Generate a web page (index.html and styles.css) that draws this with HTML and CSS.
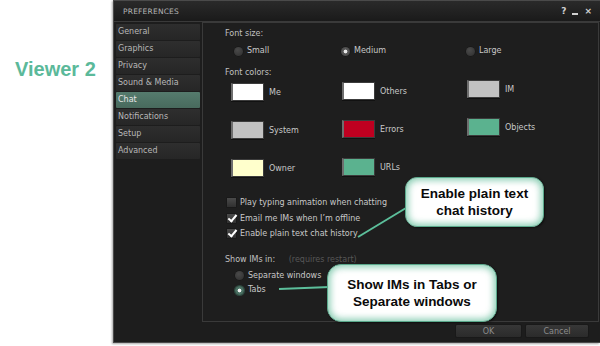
FILE: index.html
```html
<!DOCTYPE html>
<html lang="en">
<head>
  <meta charset="UTF-8">
  <title>Preferences - Chat</title>
  <link rel="stylesheet" href="styles.css">
</head>
<body>
  <div class="page">
    <div class="brand">Viewer 2</div>

    <div class="floater">
      <div class="titlebar">
        <span class="title">PREFERENCES</span>
        <span class="controls"><span>?</span><span class="min"></span><span>&#215;</span></span>
      </div>

      <div class="main">
        <ul class="tabs">
          <li>General</li>
          <li>Graphics</li>
          <li>Privacy</li>
          <li>Sound &amp; Media</li>
          <li class="active">Chat</li>
          <li>Notifications</li>
          <li>Setup</li>
          <li>Advanced</li>
        </ul>

        <div class="panel">
          <div class="label first">Font size:</div>
          <div class="sizes">
            <div class="opt"><span class="radio"></span>Small</div>
            <div class="opt"><span class="radio on"></span>Medium</div>
            <div class="opt"><span class="radio"></span>Large</div>
          </div>

          <div class="label colors-label">Font colors:</div>
          <div class="swatches">
            <div class="col col1">
              <div class="swatch"><span class="chip" style="background:#ffffff"></span>Me</div>
              <div class="swatch"><span class="chip" style="background:#c2c2c2"></span>System</div>
              <div class="swatch"><span class="chip" style="background:#ffffcc"></span>Owner</div>
            </div>
            <div class="col col2">
              <div class="swatch"><span class="chip" style="background:#ffffff"></span>Others</div>
              <div class="swatch"><span class="chip" style="background:#bf0020"></span>Errors</div>
              <div class="swatch"><span class="chip" style="background:#5bb28f"></span>URLs</div>
            </div>
            <div class="col col3">
              <div class="swatch"><span class="chip" style="background:#c2c2c2"></span>IM</div>
              <div class="swatch"><span class="chip" style="background:#5bb28f"></span>Objects</div>
            </div>
          </div>

          <div class="checks">
            <div class="check"><span class="box"></span>Play typing animation when chatting</div>
            <div class="check"><span class="box on"></span>Email me IMs when I’m offline</div>
            <div class="check"><span class="box on"></span>Enable plain text chat history</div>
          </div>

          <div class="label ims-label">Show IMs in: <span class="note">(requires restart)</span></div>
          <div class="ims">
            <div class="opt"><span class="radio"></span>Separate windows</div>
            <div class="opt"><span class="radio on green"></span>Tabs</div>
          </div>
        </div>
      </div>

      <div class="footer">
        <button class="ok">OK</button>
        <button class="cancel">Cancel</button>
      </div>
    </div>

    <!-- annotation layer -->
    <svg class="leaders" width="600" height="346" viewBox="0 0 600 346">
      <line x1="406" y1="208" x2="358" y2="237" />
      <line x1="279" y1="289" x2="330" y2="287" />
    </svg>
    <div class="callout c1">Enable plain text<br>chat history</div>
    <div class="callout c2">Show IMs in Tabs or<br>Separate windows</div>
  </div>
</body>
</html>
```

FILE: styles.css
```css
body {
  margin: 0;
  background: #fff;
  font-family: "DejaVu Sans", sans-serif;
}

.page {
  position: relative;
  width: 600px;
  height: 346px;
  display: flex;
  overflow: hidden;
}

.brand {
  width: 98px;
  padding: 57px 0 0 15px;
  font-family: "Liberation Sans", Arial, sans-serif;
  font-weight: bold;
  font-size: 20px;
  line-height: 24px;
  color: #5bb99a;
}

/* window */
.floater {
  width: 486px;
  height: 341px;
  background: #1d1d1d;
  border: 1px solid #4a4a4a;
  border-right: none;
  box-shadow: -1px 1px 2px rgba(0, 0, 0, 0.35);
  display: flex;
  flex-direction: column;
}

.titlebar {
  height: 20px;
  border-bottom: 1px solid #3a3a3a;
  background: linear-gradient(#2a2a2a, #1a1a1a);
  display: flex;
  align-items: center;
  justify-content: space-between;
  padding: 0 8px 0 9px;
}

.title {
  font-size: 7.5px;
  color: #b4b4b4;
  letter-spacing: 0.2px;
}

.controls {
  display: flex;
  align-items: center;
  gap: 6px;
  font-size: 9px;
  font-weight: bold;
  color: #d0d0d0;
}

.controls .min {
  width: 6px;
  height: 2px;
  background: #d0d0d0;
  margin-top: 5px;
}

.main {
  display: flex;
  height: 300px;
}

.tabs {
  list-style: none;
  margin: 0;
  padding: 2px 2px 0 2px;
  width: 84px;
}

.tabs li {
  height: 16px;
  margin-bottom: 1px;
  padding-left: 2px;
  background: linear-gradient(#2e2e2e, #262626);
  color: #b8b8b8;
  font-size: 8px;
  line-height: 16px;
  border-radius: 1px;
}

.tabs li.active {
  background: linear-gradient(#557b6d, #486a5d);
  color: #e6e6e6;
}

.panel {
  flex: 1;
  margin-right: 1px;
  border: 1px solid #3a3a3a;
  background: #1e1e1e;
  padding-left: 22px;
  font-size: 8px;
  color: #c8c8c8;
}

.label {
  line-height: 10px;
  margin-top: 4px;
  color: #c0c0c0;
}

.label.first {
  margin-top: 6px;
}

.sizes {
  display: grid;
  grid-template-columns: 107px 125px auto;
  margin: 7px 0 0 9px;
}

.opt {
  display: flex;
  align-items: center;
  height: 10px;
  line-height: 10px;
}

.radio {
  width: 9px;
  height: 9px;
  border-radius: 50%;
  background: radial-gradient(circle at 40% 35%, #4a4a4a, #2e2e2e);
  box-shadow: 0 0 0 0.5px #161616;
  margin-right: 4px;
  position: relative;
}

.radio.on {
  background: radial-gradient(circle, #e8e8e8 0 1.6px, #5a5a5a 2.2px, #3c3c3c);
}

.radio.on.green {
  background: radial-gradient(circle, #f0f0f0 0 1.6px, #4d7466 2.2px, #3f6255);
  box-shadow: 0 0 0 1px #2d4a40;
}

.colors-label {
  margin-top: 12px;
}

.swatches {
  display: grid;
  grid-template-columns: 111px 125px auto;
  margin: 2px 0 0 6px;
  height: 97px;
}

.col {
  display: flex;
  flex-direction: column;
  gap: 20px;
}

.col1 { padding-top: 3px; }
.col2 { padding-top: 2px; }

.swatch {
  display: flex;
  align-items: center;
  height: 18px;
  font-size: 8px;
}

.chip {
  width: 30px;
  height: 16px;
  border: 1px solid #3c3c3c;
  border-left: 2px solid #6e6e6e;
  box-shadow: 0 1px 0 #111;
  margin-right: 5px;
}

.checks {
  margin: 18px 0 0 2px;
}

.check {
  display: flex;
  align-items: center;
  height: 15.5px;
}

.box {
  width: 9px;
  height: 9px;
  background: linear-gradient(#4a4a4a, #303030);
  box-shadow: 0 0 0 0.5px #151515;
  margin-right: 4px;
  position: relative;
}

.box.on::after {
  content: "";
  position: absolute;
  left: 2.5px;
  top: -1px;
  width: 3px;
  height: 7px;
  border: solid #fff;
  border-width: 0 2px 2px 0;
  transform: rotate(40deg);
}

.ims-label {
  margin-top: 13px;
}

.note {
  color: #575757;
  margin-left: 11px;
}

.ims {
  margin: 4px 0 0 10px;
}

.ims .opt {
  height: 14.5px;
}

.footer {
  display: flex;
  justify-content: flex-end;
  gap: 3px;
  padding: 2px 11px 0 0;
}

.footer button {
  height: 14px;
  padding: 0;
  border: 1px solid #191919;
  border-radius: 2px;
  background: linear-gradient(#373737, #2b2b2b);
  color: #8c8c8c;
  font-family: "DejaVu Sans", sans-serif;
  font-size: 8px;
}

.footer .ok { width: 67px; }
.footer .cancel { width: 64px; }

/* annotations */
.leaders {
  position: absolute;
  left: 0;
  top: 0;
}

.leaders line {
  stroke: #5cbf9b;
  stroke-width: 2;
}

.callout {
  position: absolute;
  display: flex;
  align-items: center;
  justify-content: center;
  text-align: center;
  box-sizing: border-box;
  background: #fff;
  border: 1px solid #5aa88b;
  box-shadow: inset 0 0 7px 2px rgba(92, 185, 150, 0.75), 1px 1px 2px rgba(0, 0, 0, 0.5);
  font-family: "Liberation Sans", Arial, sans-serif;
  font-weight: bold;
  font-size: 13.5px;
  line-height: 17px;
  color: #0a0a0a;
}

.c1 {
  left: 405px;
  top: 177px;
  width: 139px;
  height: 50px;
  border-radius: 12px;
}

.c2 {
  left: 327px;
  top: 264px;
  width: 170px;
  height: 58px;
  border-radius: 14px;
}
```
